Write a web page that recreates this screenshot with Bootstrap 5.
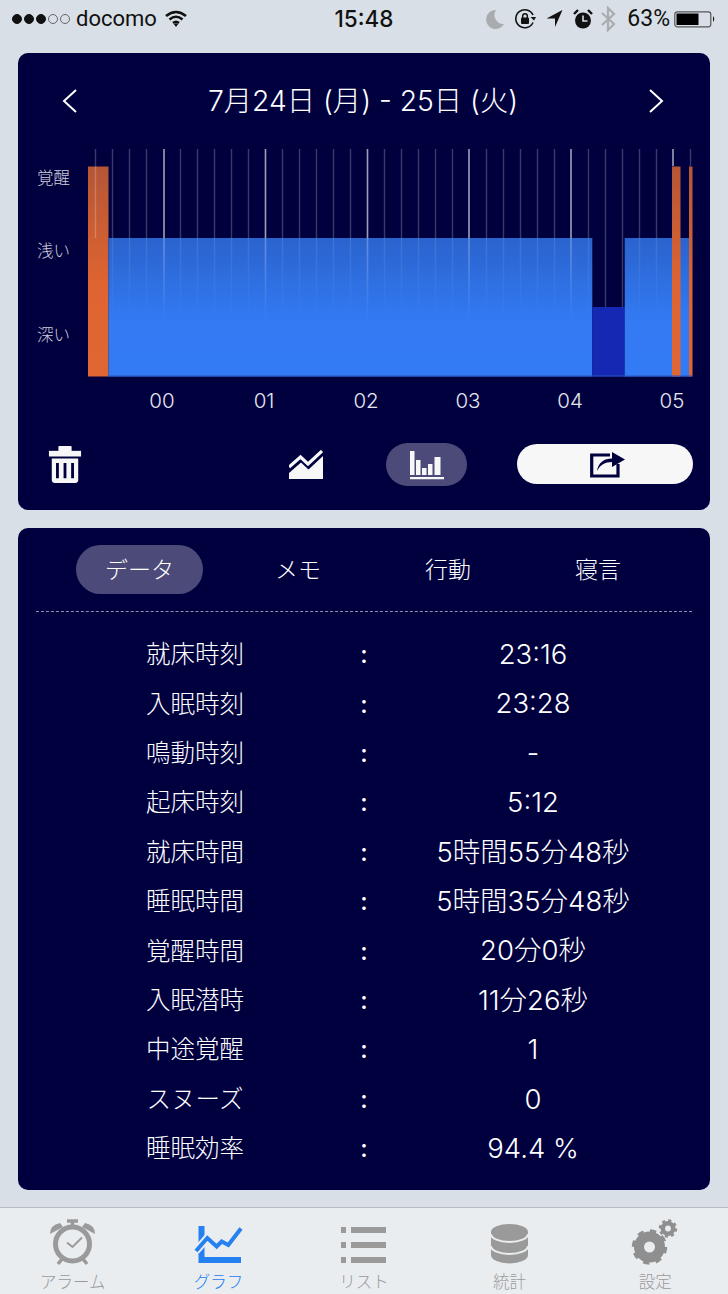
<!DOCTYPE html>
<html lang="ja">
<head>
<meta charset="utf-8">
<title>睡眠グラフ</title>
<link href="https://cdn.jsdelivr.net/npm/bootstrap@5.3.0/dist/css/bootstrap.min.css" rel="stylesheet">
<style>
html,body{height:100%}
body{width:728px;height:1294px;overflow:hidden;background:#d8dfe6;font-family:Inter,"Noto Sans CJK JP",sans-serif;font-weight:300;color:#fff}
.status-strip{height:37px;font-family:Roboto,"Noto Sans CJK JP",sans-serif;font-size:22px;font-weight:400;color:#111;padding:0 10px 0 12px;position:relative}
.status-clock{position:absolute;left:0;right:0;top:0;line-height:37px;text-align:center;font-family:Inter,sans-serif;font-weight:500;font-size:22.5px}
.sig-dot{width:10px;height:10px;border-radius:50%;background:#111;margin-right:2px;border:1px solid #111}
.sig-dot.off{background:transparent;border-color:#666}
.carrier{margin-left:4px}
.st-g9{margin-left:9px}.st-g10{margin-left:10px}.st-g7{margin-left:7px}.st-g11{margin-left:11px}
.pct{font-size:23px;margin-left:11px;padding-top:2px}
.panel-dark{background:#00003f;border:0;border-radius:10px;margin:0 18px;color:#fff}
.panel-top{margin-top:16px;height:457px}
.panel-data{margin-top:18px;height:662px;padding:17px 18px 0}
.head-row{height:96px;padding:0 46px 0 44px;font-size:28.3px}
.chart-svg{display:block}
.chart-svg text{font-family:Inter,"Noto Sans CJK JP",sans-serif;font-weight:300}
.tool-row{height:43px;margin-top:31px;padding-left:30px}
.tool-line{margin-left:207px}
.tool-bars{width:81px;height:43px;margin-left:63px;background:#4b4a78;border-radius:22px}
.tool-share{width:176px;height:40px;margin-left:50px;margin-bottom:2px;background:#f7f7f7;border-radius:20px}
.share-glyph{margin-left:6px}
.tab-strip{padding-left:40px;height:49px;flex-wrap:nowrap}
.tab-strip .nav-link{width:150px;height:49px;padding:0;line-height:50px;text-align:center;font-size:23px;font-weight:300;color:#fff;border-radius:25px}
.tab-strip .nav-link.active{width:127px;margin-right:20px;background:#4b4a78;color:#fff}
.dash-rule{border-top:1px dashed #8f8fae;margin-top:17px;margin-bottom:18px}
.stat-row{height:49.4px;font-size:24.5px}
.stat-label{width:318px;text-align:center}
.stat-colon{width:20px;text-align:center;font-weight:500}
.stat-value{width:318px;text-align:center;font-size:27.5px}
.tab-foot{position:absolute;left:0;right:0;top:1207px;height:87px;background:#e9edf0;border-top:1px solid #b7bbbe;overflow:hidden}
.foot-item{width:20%;text-align:center;color:#9a9a9a;font-size:16.5px;line-height:18px}
.foot-item.on{color:#2581f2}
.foot-item svg{display:block;margin:10px auto 5px}
</style>
</head>
<body class="position-relative">

<div class="status-strip d-flex align-items-center">
  <span class="sig-dot"></span><span class="sig-dot"></span><span class="sig-dot"></span><span class="sig-dot off"></span><span class="sig-dot off"></span>
  <span class="carrier">docomo</span>
  <svg class="ms-2" width="22" height="18" viewBox="0 0 22 18"><path d="M1 6Q11-2 21 6M4.500 9.500Q11 4 17.500 9.500M8 13Q11 10.500 14 13" fill="none" stroke="#111" stroke-width="2.600"/><path d="M8.800 14 11 17 13.200 14Q11 12.500 8.800 14Z" fill="#111"/></svg>
  <div class="status-clock">15:48</div>
  <div class="ms-auto d-flex align-items-center">
    <svg width="20" height="20" viewBox="0 0 20 20"><path d="M11 1A9.500 9.500 0 1 0 19 15 9 9 0 0 1 11 1Z" fill="#a9acaf"/></svg>
    <svg class="st-g9" width="22" height="22" viewBox="0 0 22 22"><path d="M19 14.500A9 9 0 1 1 19 7" fill="none" stroke="#111" stroke-width="1.600"/><path d="M16.500 9 20 12.500 22 9Z" fill="#111"/><rect x="7" y="9.500" width="8" height="6.500" rx="1" fill="#111"/><path d="M8.700 10V8A2.300 2.300 0 0 1 13.300 8V10" fill="none" stroke="#111" stroke-width="1.500"/></svg>
    <svg class="st-g10" width="17" height="19" viewBox="0 0 17 19"><path d="M16.500 1 9 18V9.500H.5Z" fill="#111"/></svg>
    <svg class="st-g10" width="20" height="20" viewBox="0 0 20 20"><circle cx="10" cy="11.500" r="8" fill="#111"/><path d="M10 6.500V12H14.500" fill="none" stroke="#d8dfe6" stroke-width="1.600"/><path d="M1 5 5 1M19 5 15 1" stroke="#111" stroke-width="2.400"/></svg>
    <svg class="st-g7" width="16" height="26" viewBox="0 0 16 26"><path d="M2 7 14 18 8 24V2L14 8 2 19" fill="none" stroke="#a9acaf" stroke-width="2.200"/></svg>
    <span class="pct">63%</span>
    <svg class="ms-1" width="44" height="20" viewBox="0 0 44 20"><rect x=".8" y="2.800" width="36" height="15" rx="2.500" fill="none" stroke="#555" stroke-width="1.200"/><rect x="2.500" y="4.500" width="22" height="11.500" fill="#000"/><path d="M39 7Q41.500 10 39 13Z" fill="#111"/></svg>
  </div>
</div>

<section class="card panel-dark panel-top">
  <div class="head-row d-flex align-items-center justify-content-between">
    <svg width="16" height="26" viewBox="0 0 16 26"><path d="M14 2 2 13 14 24" fill="none" stroke="#fff" stroke-width="2"/></svg>
    <span>7月24日 (月) - 25日 (火)</span>
    <svg width="16" height="26" viewBox="0 0 16 26"><path d="M2 2 14 13 2 24" fill="none" stroke="#fff" stroke-width="2"/></svg>
  </div>

  <svg class="chart-svg" width="692" height="263" viewBox="18 149 692 263">
    <defs>
      <linearGradient id="gBlue" x1="0" y1="238" x2="0" y2="377" gradientUnits="userSpaceOnUse">
        <stop offset="0" stop-color="#2a63cd"/><stop offset=".6" stop-color="#337af3"/><stop offset="1" stop-color="#337bf5"/>
      </linearGradient>
      <linearGradient id="gOrange" x1="0" y1="166" x2="0" y2="377" gradientUnits="userSpaceOnUse">
        <stop offset="0" stop-color="#b45636"/><stop offset=".55" stop-color="#de6431"/><stop offset="1" stop-color="#e06733"/>
      </linearGradient>
      <linearGradient id="gTickIn" x1="0" y1="238" x2="0" y2="320" gradientUnits="userSpaceOnUse">
        <stop offset="0" stop-color="#fff" stop-opacity=".1"/><stop offset="1" stop-color="#fff" stop-opacity="0"/>
      </linearGradient>
      <linearGradient id="gTickBIn" x1="0" y1="238" x2="0" y2="320" gradientUnits="userSpaceOnUse">
        <stop offset="0" stop-color="#fff" stop-opacity=".28"/><stop offset="1" stop-color="#fff" stop-opacity="0"/>
      </linearGradient>
    </defs>
    <rect x="88" y="166.500" width="20.500" height="210" fill="url(#gOrange)"/>
    <rect x="108.500" y="238" width="483.800" height="138.500" fill="url(#gBlue)"/>
    <rect x="592.300" y="307" width="32.400" height="69.500" fill="#1428b4"/>
    <rect x="624.700" y="238" width="65" height="138.500" fill="url(#gBlue)"/>
    <rect x="672" y="166.500" width="8.500" height="210" fill="url(#gOrange)"/>
    <rect x="689" y="166.500" width="3.500" height="210" fill="url(#gOrange)"/>
    <rect x="108.500" y="375.500" width="584" height="1" fill="#2a55c0"/>
    <path d="M95.500 149V238M112.500 149V238M129.500 149V238M146.500 149V238M180.500 149V238M197.500 149V238M214.500 149V238M231.500 149V238M248.500 149V238M282.500 149V238M299.500 149V238M316.500 149V238M333.500 149V238M350.500 149V238M384.500 149V238M401.500 149V238M418.500 149V238M435.500 149V238M452.500 149V238M486.500 149V238M503.500 149V238M520.500 149V238M537.500 149V238M554.500 149V238M588.500 149V238M605.500 149V307M622.500 149V307M639.500 149V238M656.500 149V238M690.500 149V166" fill="none" stroke="#fff" stroke-opacity=".22" stroke-width="1.400"/>
    <path d="M164 149V238M265.500 149V238M367.500 149V238M469 149V238M571 149V238M673 149V166" fill="none" stroke="#fff" stroke-opacity=".62" stroke-width="1.600"/>
    <path d="M112.500 238V320M129.500 238V320M146.500 238V320M180.500 238V320M197.500 238V320M214.500 238V320M231.500 238V320M248.500 238V320M282.500 238V320M299.500 238V320M316.500 238V320M333.500 238V320M350.500 238V320M384.500 238V320M401.500 238V320M418.500 238V320M435.500 238V320M452.500 238V320M486.500 238V320M503.500 238V320M520.500 238V320M537.500 238V320M554.500 238V320M588.500 238V320M639.500 238V320M656.500 238V320" fill="none" stroke="url(#gTickIn)" stroke-width="1.400"/>
    <path d="M164 238V320M265.500 238V320M367.500 238V320M469 238V320M571 238V320" fill="none" stroke="url(#gTickBIn)" stroke-width="1.600"/>
    <g fill="#cfcfd8" font-size="16.500"><text x="37" y="183.500">覚醒</text><text x="37" y="257">浅い</text><text x="37" y="341">深い</text></g>
    <g fill="#e6e6ee" font-size="20.500" text-anchor="middle"><text x="162" y="408">00</text><text x="264" y="408">01</text><text x="366" y="408">02</text><text x="468" y="408">03</text><text x="570" y="408">04</text><text x="672" y="408">05</text></g>
  </svg>

  <div class="tool-row d-flex align-items-center">
    <svg width="34" height="40" viewBox="0 0 36 42"><rect x="11" y="1" width="14" height="6" rx="1" fill="#f7f7f7"/><rect x="1" y="6" width="34" height="6" fill="#f7f7f7"/><path d="M4 14H32V37Q32 40 29 40H7Q4 40 4 37Z" fill="#f7f7f7"/><path d="M10 19V35M18 19V35M26 19V35" stroke="#00003f" stroke-width="3"/></svg>
    <svg class="tool-line" width="34" height="30" viewBox="0 0 34 30"><path d="M0 17 11.500 7 19 14 33 1" fill="none" stroke="#f7f7f7" stroke-width="3.200"/><path d="M0 29V23L12 12.500 19.500 19.500 34 6V29Z" fill="#f7f7f7"/></svg>
    <div class="tool-bars d-flex align-items-center justify-content-center">
      <svg width="36" height="30" viewBox="0 0 36 30"><path d="M1 1H5.500V25H1ZM7 10H11.500V25H7ZM13 18H17.500V25H13ZM19 14H23.500V25H19ZM25.500 7H31.500V25H25.500ZM1 27H35V29.300H1Z" fill="#f7f7f7"/></svg>
    </div>
    <div class="tool-share d-flex align-items-center justify-content-center">
      <svg class="share-glyph" width="36" height="30" viewBox="0 0 36 30"><path d="M20 6H1.700V27H28V15" fill="none" stroke="#00003f" stroke-width="3.200"/><path d="M7 22C8 14 14 9.500 22 9.500V3L35 10.500 22 18V13C15 13 10 16 7 22Z" fill="#00003f"/></svg>
    </div>
  </div>
</section>

<section class="card panel-dark panel-data">
  <ul class="nav tab-strip">
    <li class="nav-item"><a class="nav-link active" href="#">データ</a></li>
    <li class="nav-item"><a class="nav-link" href="#">メモ</a></li>
    <li class="nav-item"><a class="nav-link" href="#">行動</a></li>
    <li class="nav-item"><a class="nav-link" href="#">寝言</a></li>
  </ul>
  <div class="dash-rule"></div>
  <div class="stat-row d-flex align-items-center"><div class="stat-label">就床時刻</div><div class="stat-colon">:</div><div class="stat-value">23:16</div></div>
  <div class="stat-row d-flex align-items-center"><div class="stat-label">入眠時刻</div><div class="stat-colon">:</div><div class="stat-value">23:28</div></div>
  <div class="stat-row d-flex align-items-center"><div class="stat-label">鳴動時刻</div><div class="stat-colon">:</div><div class="stat-value">-</div></div>
  <div class="stat-row d-flex align-items-center"><div class="stat-label">起床時刻</div><div class="stat-colon">:</div><div class="stat-value">5:12</div></div>
  <div class="stat-row d-flex align-items-center"><div class="stat-label">就床時間</div><div class="stat-colon">:</div><div class="stat-value">5時間55分48秒</div></div>
  <div class="stat-row d-flex align-items-center"><div class="stat-label">睡眠時間</div><div class="stat-colon">:</div><div class="stat-value">5時間35分48秒</div></div>
  <div class="stat-row d-flex align-items-center"><div class="stat-label">覚醒時間</div><div class="stat-colon">:</div><div class="stat-value">20分0秒</div></div>
  <div class="stat-row d-flex align-items-center"><div class="stat-label">入眠潜時</div><div class="stat-colon">:</div><div class="stat-value">11分26秒</div></div>
  <div class="stat-row d-flex align-items-center"><div class="stat-label">中途覚醒</div><div class="stat-colon">:</div><div class="stat-value">1</div></div>
  <div class="stat-row d-flex align-items-center"><div class="stat-label">スヌーズ</div><div class="stat-colon">:</div><div class="stat-value">0</div></div>
  <div class="stat-row d-flex align-items-center"><div class="stat-label">睡眠効率</div><div class="stat-colon">:</div><div class="stat-value">94.4 %</div></div>
</section>

<nav class="tab-foot d-flex">
  <div class="foot-item">
    <svg width="60" height="50" viewBox="43 1217 60 50"><circle cx="72.500" cy="1243" r="17" fill="none" stroke="#9a9a9a" stroke-width="5"/><path d="M50 1233Q50 1224 60 1222L63 1226ZM95 1233Q95 1224 85 1222L82 1226Z" fill="#9a9a9a"/><path d="M67 1220H78M72.500 1220V1226M58 1263 62 1258M87 1263 83 1258" stroke="#9a9a9a" stroke-width="3.500" fill="none"/><path d="M67 1241.500 72.500 1246 82 1236.500" fill="none" stroke="#9a9a9a" stroke-width="2"/></svg>
    アラーム
  </div>
  <div class="foot-item on">
    <svg width="60" height="50" viewBox="188 1217 60 50"><path d="M198.500 1225H204.500V1262H198.500ZM198.500 1256H241V1262H198.500Z" fill="#2581f2"/><path d="M196 1250 207.300 1237 216.700 1245.500 221.700 1240.500 228.300 1244 241 1227.500" fill="none" stroke="#e9edf0" stroke-width="8"/><path d="M196 1250 207.300 1237 216.700 1245.500 221.700 1240.500 228.300 1244 241 1227.500" fill="none" stroke="#2581f2" stroke-width="4"/></svg>
    グラフ
  </div>
  <div class="foot-item">
    <svg width="60" height="50" viewBox="334 1217 60 50"><path d="M341 1226H346V1232H341ZM351 1226H386V1232H351ZM341 1241H346V1247H341ZM351 1241H386V1247H351ZM341 1256H346V1262H341ZM351 1256H386V1262H351Z" fill="#9a9a9a"/></svg>
    リスト
  </div>
  <div class="foot-item">
    <svg width="60" height="50" viewBox="479 1217 60 50"><path d="M490 1231A18.500 8 0 0 1 527 1231V1254A18.500 8.500 0 0 1 490 1254Z" fill="#9a9a9a"/><path d="M490 1233A18.500 8 0 0 0 527 1233M490 1245A18.500 8 0 0 0 527 1245" fill="none" stroke="#e9edf0" stroke-width="2"/></svg>
    統計
  </div>
  <div class="foot-item">
    <svg width="60" height="50" viewBox="625 1217 60 50"><circle cx="649.500" cy="1246" r="10.500" fill="none" stroke="#8f8f8f" stroke-width="10"/><circle cx="649.500" cy="1246" r="15.500" fill="none" stroke="#8f8f8f" stroke-width="4.500" stroke-dasharray="6 6.170"/><circle cx="668" cy="1227.500" r="5.200" fill="none" stroke="#8f8f8f" stroke-width="4.500"/><circle cx="668" cy="1227.500" r="8" fill="none" stroke="#8f8f8f" stroke-width="2.500" stroke-dasharray="3.100 3.180"/></svg>
    設定
  </div>
</nav>

<script src="https://cdn.jsdelivr.net/npm/bootstrap@5.3.0/dist/js/bootstrap.bundle.min.js"></script>
</body>
</html>
